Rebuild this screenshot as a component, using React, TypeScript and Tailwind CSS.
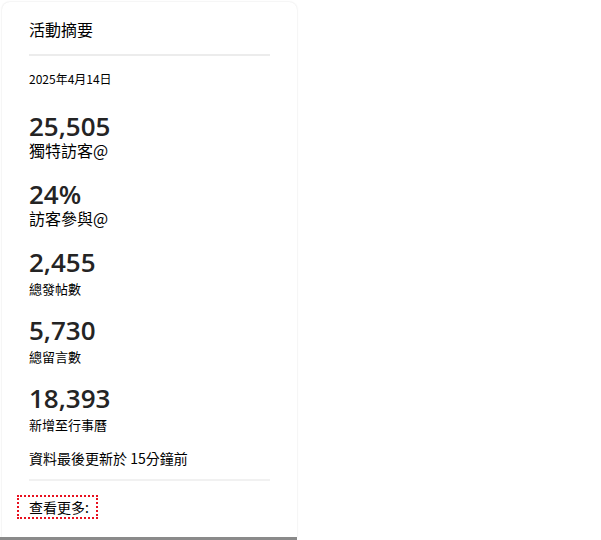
import React from "react";

type Stat = {
  value: string;
  label: string;
  big?: boolean;
};

const stats: Stat[] = [
  { value: "25,505", label: "獨特訪客@", big: true },
  { value: "24%", label: "訪客參與@", big: true },
  { value: "2,455", label: "總發帖數" },
  { value: "5,730", label: "總留言數" },
  { value: "18,393", label: "新增至行事曆" },
];

function StatBlock({ stat }: { stat: Stat }) {
  return (
    <div className="h-[68px]">
      <div className="font-['Open_Sans',sans-serif] text-[26px] leading-[28px] font-semibold text-[#242424]">
        {stat.value}
      </div>
      {stat.big ? (
        <div className="text-[16px] leading-5 text-black">{stat.label}</div>
      ) : (
        <div className="mt-[3px] text-[13px] leading-5 text-black">{stat.label}</div>
      )}
    </div>
  );
}

function App() {
  return (
    <div className="w-[601px] h-[540px] bg-white overflow-hidden font-['Noto_Sans_CJK_TC',sans-serif]">
      <div className="w-[297px] h-[540px] flex flex-col">
        <div className="mt-[2px] ml-[2px] h-[535px] rounded-t-lg bg-white shadow-[0_0_2px_rgba(0,0,0,0.14)] px-[27px] pt-[15px]">
          <div className="text-[16px] leading-6 text-black">活動摘要</div>
          <div className="mt-[13px] h-[2px] bg-[#ececec]" />
          <div className="mt-[15px] text-[12px] leading-4 text-black">2025年4月14日</div>

          <div className="mt-[25px] flex flex-col">
            {stats.map((s) => (
              <StatBlock key={s.value} stat={s} />
            ))}
          </div>

          <div className="-mt-[4px] text-[14px] leading-5 text-black">
            資料最後更新於 15分鐘前
          </div>
          <div className="mt-[11px] h-[2px] bg-[#f1f1f1]" />
          <div className="mt-[13px]">
            <a
              href="#"
              className="-ml-[10px] inline-block pl-[10px] pr-[7px] text-[14px] leading-5 text-black outline-2 outline-dotted outline-[#e8101e]"
            >
              查看更多:
            </a>
          </div>
        </div>
        <div className="h-[3px] bg-[#8a8a8a]" />
      </div>
    </div>
  );
}

export default App;
